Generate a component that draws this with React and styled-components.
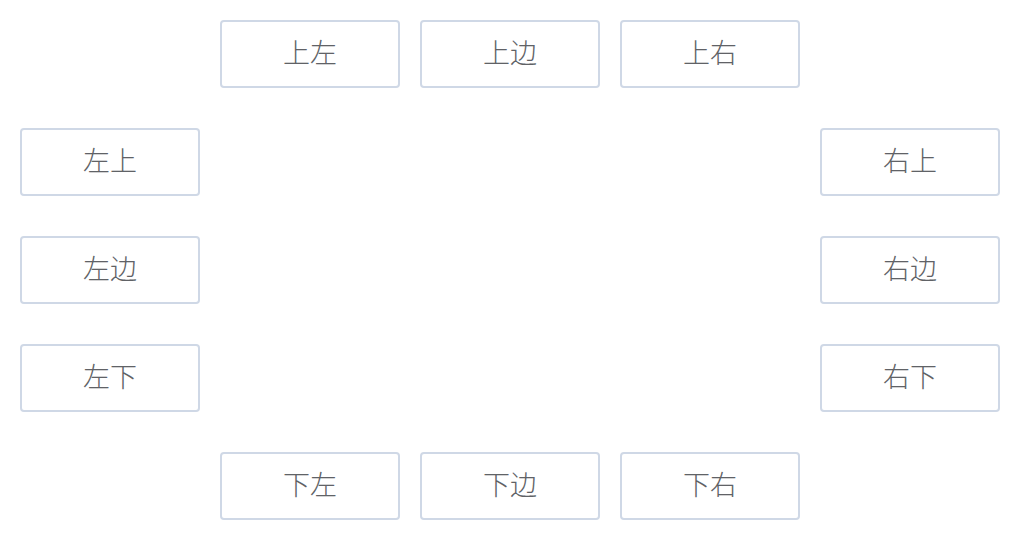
import React from "react";
import styled, { createGlobalStyle } from "styled-components";

const GlobalStyle = createGlobalStyle`
  html, body {
    margin: 0;
    padding: 0;
    background: #fff;
  }
  body {
    font-family: "Noto Sans CJK SC", "Noto Sans", sans-serif;
  }
`;

const Board = styled.div`
  display: grid;
  grid-template-columns: repeat(5, 180px);
  grid-template-rows: repeat(5, 68px);
  column-gap: 20px;
  row-gap: 40px;
  padding: 20px;
`;

const Btn = styled.button`
  grid-column: ${(p) => p.col};
  grid-row: ${(p) => p.row};
  box-sizing: border-box;
  width: 180px;
  height: 68px;
  border: 2px solid #cfd8e6;
  border-radius: 4px;
  background: #fff;
  color: #606266;
  font-family: "Noto Sans CJK SC", "Noto Sans", sans-serif;
  font-size: 27px;
  font-weight: 300;
  line-height: 1;
  padding: 0 0 5px;
  cursor: pointer;
`;

const buttons = [
  { label: "上左", col: 2, row: 1 },
  { label: "上边", col: 3, row: 1 },
  { label: "上右", col: 4, row: 1 },
  { label: "左上", col: 1, row: 2 },
  { label: "右上", col: 5, row: 2 },
  { label: "左边", col: 1, row: 3 },
  { label: "右边", col: 5, row: 3 },
  { label: "左下", col: 1, row: 4 },
  { label: "右下", col: 5, row: 4 },
  { label: "下左", col: 2, row: 5 },
  { label: "下边", col: 3, row: 5 },
  { label: "下右", col: 4, row: 5 },
];

const App = () => {
  return (
    <>
      <GlobalStyle />
      <Board>
        {buttons.map((b) => (
          <Btn key={b.label} col={b.col} row={b.row}>
            {b.label}
          </Btn>
        ))}
      </Board>
    </>
  );
};

export default App;
